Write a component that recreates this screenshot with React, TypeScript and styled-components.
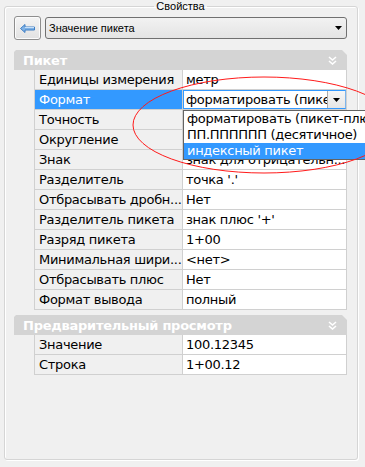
import React from 'react'
import styled, { createGlobalStyle } from 'styled-components'

const GlobalStyle = createGlobalStyle`
  html, body {
    margin: 0;
    padding: 0;
    background: #f0f0f0;
  }
  body {
    width: 365px;
    height: 467px;
    overflow: hidden;
    font-family: "DejaVu Sans", sans-serif;
  }
`

const Screen = styled.div`
  position: relative;
  width: 365px;
  height: 467px;
  padding: 0 7px 0 4px;
  box-sizing: border-box;
`

const Group = styled.fieldset`
  box-sizing: border-box;
  height: 460px;
  margin: 0;
  padding: 3px 10px 0 9px;
  min-width: 0;
  border: 1px solid #d5d5d5;
  border-radius: 3px;
  box-shadow: inset 1px 1px 0 #fff, 1px 1px 0 #fff;
`

const Legend = styled.legend`
  margin: 0 auto;
  padding: 0 2px;
  font-family: "Liberation Sans", Arial, sans-serif;
  font-size: 11px;
  line-height: 13px;
  color: #000;
`

const Toolbar = styled.div`
  display: flex;
  align-items: center;
  gap: 4px;
  height: 24px;
`

const BackButton = styled.button`
  display: flex;
  align-items: center;
  justify-content: center;
  width: 27px;
  height: 24px;
  padding: 0;
  border: 1px solid #8e8e8e;
  border-radius: 3px;
  background: linear-gradient(#f4f4f4, #e2e2e2);
  box-shadow: inset 0 0 0 1px #fcfcfc;
`

const Combo = styled.div`
  flex: 1;
  display: flex;
  align-items: center;
  justify-content: space-between;
  height: 22px;
  box-sizing: border-box;
  padding: 0 4px 0 3px;
  border: 1px solid #707070;
  border-radius: 3px;
  background: linear-gradient(#f2f2f2, #e4e4e4);
  font-family: "Liberation Sans", Arial, sans-serif;
  font-size: 11px;
  color: #000;
`

const Panel = styled.section<{ $gap: number }>`
  margin-top: ${(p) => p.$gap}px;
`

const PanelHeader = styled.div`
  display: flex;
  align-items: center;
  justify-content: space-between;
  height: 20px;
  padding: 0 10px 0 9px;
  background: #d4d4d4;
  clip-path: polygon(2px 0, calc(100% - 5px) 0, 100% 5px, 100% 100%, 0 100%, 0 2px);
  color: #fff;
  font-size: 13px;
  font-weight: bold;
  letter-spacing: -0.25px;
`

const Rows = styled.div`
  margin-left: 20px;
  border-left: 1px solid #d0d0d0;
  border-right: 1px solid #d0d0d0;
`

const Row = styled.div`
  display: grid;
  grid-template-columns: 148px 1fr;
  height: 20px;
  box-sizing: border-box;
  border-bottom: 1px solid #d0d0d0;
  font-size: 13px;
  line-height: 19px;
  letter-spacing: -0.3px;
  color: #000;
`

const NameCell = styled.div<{ $selected?: boolean }>`
  padding-left: 4px;
  border-right: 1px solid #d0d0d0;
  background: ${(p) => (p.$selected ? '#3399ff' : '#f0f0f0')};
  color: ${(p) => (p.$selected ? '#fff' : '#000')};
  white-space: nowrap;
  overflow: hidden;
`

const ValueCell = styled.div`
  position: relative;
  padding-left: 3px;
  background: #fff;
  white-space: nowrap;
  overflow: hidden;
`

const EditCell = styled.div`
  position: relative;
  min-width: 0;
  background: #fff;
`

const Editor = styled.div`
  display: flex;
  align-items: center;
  height: 19px;
  box-sizing: border-box;
  border: 1px solid #3399ff;
  border-right-color: #7eb4ea;
  padding-left: 2px;
  white-space: nowrap;
`

const EditorText = styled.span`
  flex: 1;
  min-width: 0;
  overflow: hidden;
`

const DropButton = styled.span`
  flex-shrink: 0;
  display: flex;
  align-items: center;
  justify-content: center;
  width: 18px;
  height: 17px;
  box-sizing: border-box;
  border-left: 1px solid #acacac;
  background: linear-gradient(#f6f6f6, #e6e6e6);
`

const DropList = styled.ul`
  position: absolute;
  top: 20px;
  left: 0;
  z-index: 3;
  width: 190px;
  margin: 0;
  padding: 0;
  list-style: none;
  background: #fff;
  border: 1px solid #646464;
  border-right: none;
`

const DropItem = styled.li<{ $active?: boolean }>`
  height: 16px;
  padding-left: 3px;
  line-height: 16px;
  white-space: nowrap;
  background: ${(p) => (p.$active ? '#3399ff' : '#fff')};
  color: ${(p) => (p.$active ? '#fff' : '#000')};
`

const Annotation = styled.svg`
  position: absolute;
  top: 0;
  left: 0;
  z-index: 5;
  pointer-events: none;
`

const ArrowIcon = () => (
  <svg width="15" height="9" viewBox="0 0 15 9">
    <path d="M0.5 4.5 L5 0.5 V3 H14.5 V6 H5 V8.5 Z" fill="#7fb2e6" stroke="#3f7fc4" strokeWidth="1" />
    <path d="M5 3.5 H14" stroke="#c8e0f8" strokeWidth="1" />
  </svg>
)

const DownTriangle = () => (
  <svg width="7" height="4" viewBox="0 0 7 4">
    <path d="M0 0 H7 L3.5 4 Z" fill="#000" />
  </svg>
)

const Chevrons = () => (
  <svg width="9" height="9" viewBox="0 0 9 9">
    <path d="M1 1 L4.5 4 L8 1 M1 5 L4.5 8 L8 5" fill="none" stroke="#fff" strokeWidth="1.6" />
  </svg>
)

const piketRows = [
  { name: 'Единицы измерения', value: 'метр' },
  { name: 'Формат', value: 'форматировать (пикет-плюс)', editing: true },
  { name: 'Точность', value: '0.00' },
  { name: 'Округление', value: '0.01' },
  { name: 'Знак', value: 'знак для отрицательн...' },
  { name: 'Разделитель', value: "точка '.'" },
  { name: 'Отбрасывать дробн...', value: 'Нет' },
  { name: 'Разделитель пикета', value: "знак плюс '+'" },
  { name: 'Разряд пикета', value: '1+00' },
  { name: 'Минимальная шири...', value: '<нет>' },
  { name: 'Отбрасывать плюс', value: 'Нет' },
  { name: 'Формат вывода', value: 'полный' },
]

const previewRows = [
  { name: 'Значение', value: '100.12345' },
  { name: 'Строка', value: '1+00.12' },
]

const formatOptions = [
  'форматировать (пикет-плюс)',
  'ПП.ПППППП (десятичное)',
  'индексный пикет',
]

const App: React.FC = () => {
  return (
    <Screen>
      <GlobalStyle />
      <Group>
        <Legend>Свойства</Legend>
        <Toolbar>
          <BackButton>
            <ArrowIcon />
          </BackButton>
          <Combo>
            <span>Значение пикета</span>
            <DownTriangle />
          </Combo>
        </Toolbar>

        <Panel $gap={10}>
          <PanelHeader>
            <span>Пикет</span>
            <Chevrons />
          </PanelHeader>
          <Rows>
            {piketRows.map((row) => (
              <Row key={row.name}>
                <NameCell $selected={row.editing}>{row.name}</NameCell>
                {row.editing ? (
                  <EditCell>
                    <Editor>
                      <EditorText>{row.value}</EditorText>
                      <DropButton>
                        <DownTriangle />
                      </DropButton>
                    </Editor>
                    <DropList>
                      {formatOptions.map((opt, i) => (
                        <DropItem key={opt} $active={i === 2}>
                          {opt}
                        </DropItem>
                      ))}
                    </DropList>
                  </EditCell>
                ) : (
                  <ValueCell>{row.value}</ValueCell>
                )}
              </Row>
            ))}
          </Rows>
        </Panel>

        <Panel $gap={5}>
          <PanelHeader>
            <span>Предварительный просмотр</span>
            <Chevrons />
          </PanelHeader>
          <Rows>
            {previewRows.map((row) => (
              <Row key={row.name}>
                <NameCell>{row.name}</NameCell>
                <ValueCell>{row.value}</ValueCell>
              </Row>
            ))}
          </Rows>
        </Panel>
      </Group>

      <Annotation width="365" height="467" viewBox="0 0 365 467">
        <ellipse cx="264" cy="125" rx="131" ry="48" fill="none" stroke="#ff1a1a" strokeWidth="1" />
      </Annotation>
    </Screen>
  )
}

export default App
